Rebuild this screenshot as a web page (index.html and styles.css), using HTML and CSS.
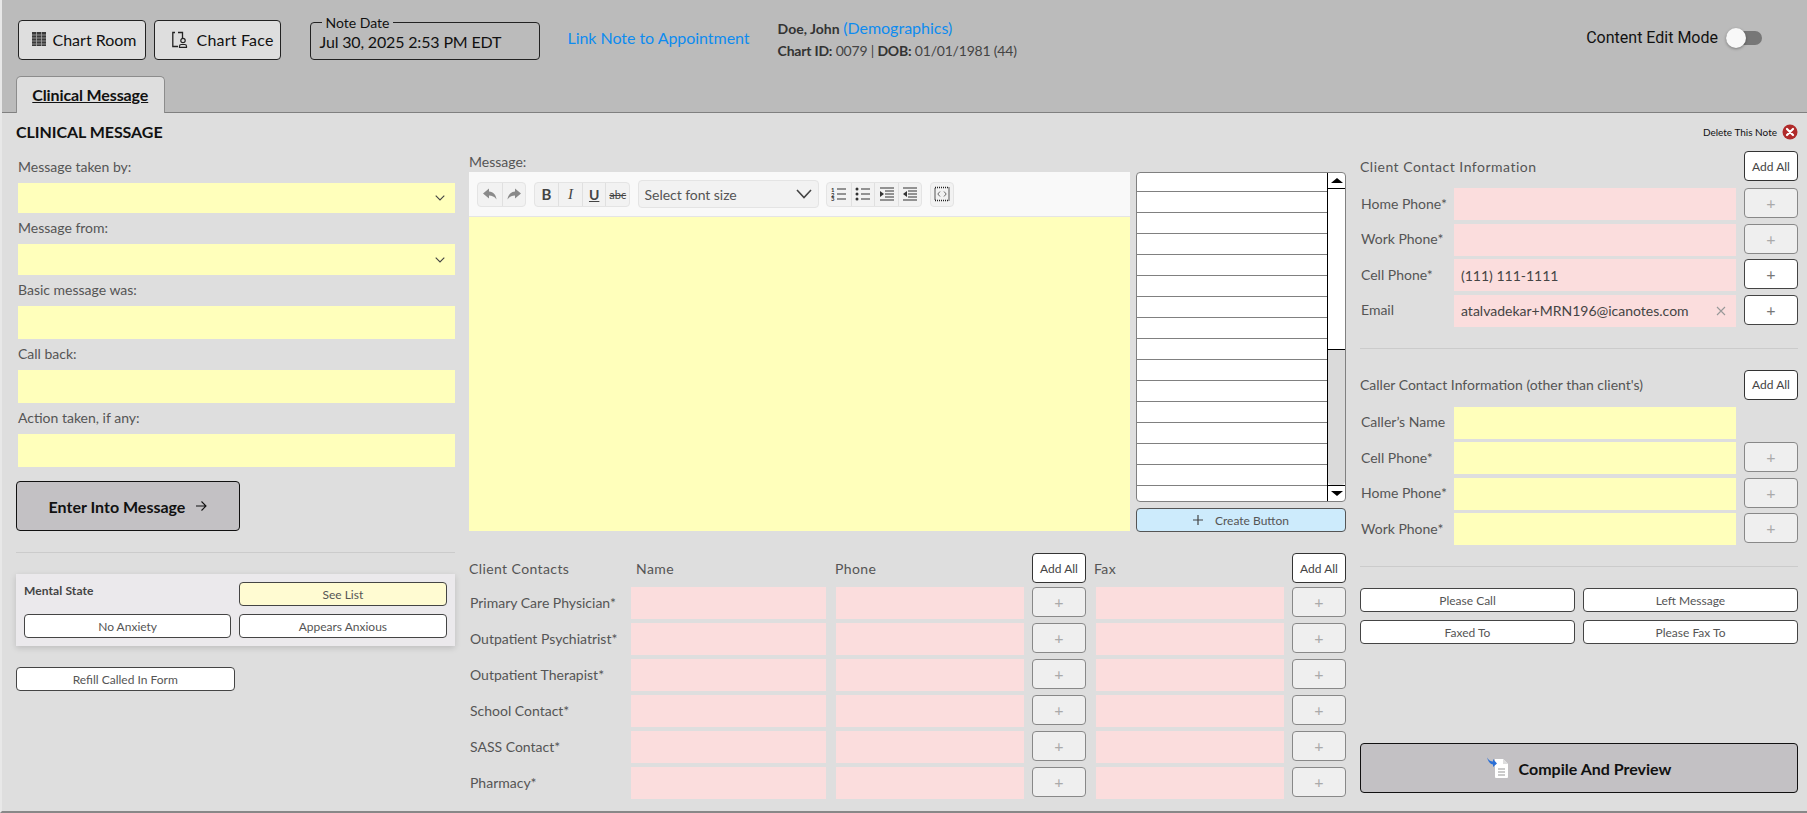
FILE: index.html
```html
<!DOCTYPE html>
<html lang="en">
<head>
<meta charset="utf-8">
<title>Clinical Message</title>
<link rel="stylesheet" href="styles.css">
</head>
<body>
<div class="page">
  <header class="top">
    <div class="topbar">
      <button class="chart-btn chart-room">
        <svg viewBox="0 0 14 14" width="14" height="14"><path d="M0 0h14v14H0z" fill="#3a3a3a"/><path d="M4.500 0v14M9.500 0v14M0 3h14M0 6h14M0 9h14M0 12h14" stroke="#a8a8a8" stroke-width=".8" fill="none"/></svg>
        <span>Chart Room</span>
      </button>
      <button class="chart-btn chart-face">
        <svg viewBox="0 0 16 17" width="16" height="17"><path d="M6 15.500H.8V1.500H3M6 1.500h4.500V7" fill="none" stroke="#222" stroke-width="1.300"/><circle cx="11" cy="9.500" r="2.200" fill="none" stroke="#222" stroke-width="1.200"/><path d="M7.500 16.400v-1.200c0-1 .9-1.700 1.800-1.700h3.400c.9 0 1.800.7 1.800 1.700v1.200z" fill="none" stroke="#222" stroke-width="1.200"/></svg>
        <span>Chart Face</span>
      </button>
      <fieldset class="note-date">
        <legend>Note Date</legend>
        <div class="note-val">Jul 30, 2025 2:53 PM EDT</div>
      </fieldset>
      <a class="link-appt" href="#">Link Note to Appointment</a>
      <div class="patient">
        <div class="pt-line"><b>Doe, John</b> <a class="demo" href="#">(Demographics)</a></div>
        <div class="pt-line tight"><b>Chart ID:</b> 0079 | <b>DOB:</b> 01/01/1981 (44)</div>
      </div>
      <div class="edit-mode">
        <span>Content Edit Mode</span>
        <span class="toggle"><span class="thumb"></span></span>
      </div>
    </div>
    <div class="tabs"><a class="tab" href="#">Clinical Message</a></div>
  </header>

  <main class="main">
    <div class="title-row">
      <h1 class="title">CLINICAL MESSAGE</h1>
      <div class="delete">
        <span>Delete This Note</span>
        <svg viewBox="0 0 16 16" width="16" height="16"><circle cx="8" cy="8" r="7.500" fill="#b02a2a"/><path d="M5 5l6 6M11 5l-6 6" stroke="#fff" stroke-width="2.200" stroke-linecap="round"/></svg>
      </div>
    </div>

    <div class="cols">
      <section class="col-left">
        <div class="f-label">Message taken by:</div>
        <div class="yselect"><svg viewBox="0 0 10 6" width="10" height="6"><path d="M.7.7L5 5l4.300-4.300" fill="none" stroke="#444" stroke-width="1.100"/></svg></div>
        <div class="f-label">Message from:</div>
        <div class="yselect y31"><svg viewBox="0 0 10 6" width="10" height="6"><path d="M.7.7L5 5l4.300-4.300" fill="none" stroke="#444" stroke-width="1.100"/></svg></div>
        <div class="f-label">Basic message was:</div>
        <input class="yinput" type="text">
        <div class="f-label">Call back:</div>
        <input class="yinput" type="text">
        <div class="f-label">Action taken, if any:</div>
        <input class="yinput" type="text">
        <button class="big-btn enter">Enter Into Message
          <svg viewBox="0 0 12 12" width="12" height="12"><path d="M1 6h10M6.500 1.500L11 6l-4.500 4.500" fill="none" stroke="#111" stroke-width="1.100"/></svg>
        </button>
        <hr class="rule">
        <div class="panel">
          <div class="panel-title">Mental State</div>
          <button class="sbtn see">See List</button>
          <button class="sbtn">No Anxiety</button>
          <button class="sbtn">Appears Anxious</button>
        </div>
        <button class="sbtn refill">Refill Called In Form</button>
      </section>

      <section class="col-mid">
        <div class="msg-label">Message:</div>
        <div class="editor-row">
          <div class="editor">
            <div class="ed-tools">
              <div class="ed-group">
                <span class="ed-btn"><svg viewBox="0 0 16 14" width="16" height="14"><path d="M7 1.500L1 6.500l6 5V8.500c3 0 5.500 1 7.500 4-.5-4.500-3-7.500-7.500-8z" fill="#8a8a8a"/></svg></span>
                <span class="ed-btn"><svg viewBox="0 0 16 14" width="16" height="14"><path d="M9 1.500l6 5-6 5V8.500c-3 0-5.500 1-7.500 4 .5-4.500 3-7.500 7.500-8z" fill="#8a8a8a"/></svg></span>
              </div>
              <div class="ed-group">
                <span class="ed-btn ed-b">B</span>
                <span class="ed-btn ed-i">I</span>
                <span class="ed-btn ed-u">U</span>
                <span class="ed-btn ed-s">abc</span>
              </div>
              <div class="ed-size">
                <span>Select font size</span>
                <svg viewBox="0 0 16 10" width="16" height="10"><path d="M1 1l7 7.500L15 1" fill="none" stroke="#444" stroke-width="1.600"/></svg>
              </div>
              <div class="ed-group">
                <span class="ed-btn"><svg viewBox="0 0 16 14" width="16" height="14"><path d="M6 2h9M6 7h9M6 12h9" stroke="#333" stroke-width="1.200"/><text x="0" y="5" class="svg-num">1</text><text x="0" y="9.500" class="svg-num">2</text><text x="0" y="14" class="svg-num">3</text></svg></span>
                <span class="ed-btn"><svg viewBox="0 0 16 14" width="16" height="14"><path d="M6 2h9M6 7h9M6 12h9" stroke="#333" stroke-width="1.200"/><circle cx="2" cy="2" r="1.500" fill="#333"/><circle cx="2" cy="7" r="1.500" fill="#333"/><circle cx="2" cy="12" r="1.500" fill="#333"/></svg></span>
                <span class="ed-btn"><svg viewBox="0 0 16 14" width="16" height="14"><path d="M1 1h14M6 4h9M6 7h9M6 10h9M1 13h14" stroke="#333" stroke-width="1"/><path d="M1 4l4 3-4 3z" fill="#333"/></svg></span>
                <span class="ed-btn"><svg viewBox="0 0 16 14" width="16" height="14"><path d="M1 1h14M6 4h9M6 7h9M6 10h9M1 13h14" stroke="#333" stroke-width="1"/><path d="M5 4L1 7l4 3z" fill="#333"/></svg></span>
              </div>
              <div class="ed-group">
                <span class="ed-btn ed-code"><svg viewBox="0 0 16 16" width="16" height="16"><rect x="1" y="1.500" width="14" height="13" fill="none" stroke="#222" stroke-width="1.500" stroke-dasharray="1 1"/><path d="M6 5.500L3.800 8 6 10.500M10 5.500L12.200 8 10 10.500" fill="none" stroke="#666" stroke-width="1"/></svg></span>
              </div>
            </div>
            <div class="ed-body"></div>
          </div>
          <div class="side">
            <div class="listbox">
              <div class="list-rows">
                <div class="lrow first"></div>
                <div class="lrow"></div><div class="lrow"></div><div class="lrow"></div><div class="lrow"></div>
                <div class="lrow"></div><div class="lrow"></div><div class="lrow"></div><div class="lrow"></div>
                <div class="lrow"></div><div class="lrow"></div><div class="lrow"></div><div class="lrow"></div>
                <div class="lrow"></div><div class="lrow"></div>
                <div class="lrow last"></div>
              </div>
              <div class="sbar">
                <div class="sb-up"></div>
                <div class="sb-thumb"></div>
                <div class="sb-track"></div>
                <div class="sb-down"></div>
              </div>
            </div>
            <button class="create"><svg viewBox="0 0 10 10" width="10" height="10"><path d="M5 0v10M0 5h10" stroke="#444" stroke-width="1.200"/></svg><span>Create Button</span></button>
          </div>
        </div>

        <div class="contacts">
          <div class="c-head">Client Contacts</div>
          <div class="c-head c-name">Name</div>
          <div class="c-head c-phone">Phone</div>
          <button class="add-all">Add All</button>
          <div class="c-head c-fax">Fax</div>
          <button class="add-all">Add All</button>

          <div class="c-label">Primary Care Physician*</div>
          <input class="pinput" type="text"><input class="pinput" type="text"><button class="plus">+</button><input class="pinput" type="text"><button class="plus">+</button>
          <div class="c-label">Outpatient Psychiatrist*</div>
          <input class="pinput" type="text"><input class="pinput" type="text"><button class="plus">+</button><input class="pinput" type="text"><button class="plus">+</button>
          <div class="c-label">Outpatient Therapist*</div>
          <input class="pinput" type="text"><input class="pinput" type="text"><button class="plus">+</button><input class="pinput" type="text"><button class="plus">+</button>
          <div class="c-label">School Contact*</div>
          <input class="pinput" type="text"><input class="pinput" type="text"><button class="plus">+</button><input class="pinput" type="text"><button class="plus">+</button>
          <div class="c-label">SASS Contact*</div>
          <input class="pinput" type="text"><input class="pinput" type="text"><button class="plus">+</button><input class="pinput" type="text"><button class="plus">+</button>
          <div class="c-label">Pharmacy*</div>
          <input class="pinput" type="text"><input class="pinput" type="text"><button class="plus">+</button><input class="pinput" type="text"><button class="plus">+</button>
        </div>
      </section>

      <section class="col-right">
        <div class="r-head spaced">
          <span>Client Contact Information</span>
          <button class="add-all">Add All</button>
        </div>
        <div class="r-grid">
          <div class="r-label">Home Phone*</div><input class="pinput" type="text"><button class="plus">+</button>
          <div class="r-label">Work Phone*</div><input class="pinput" type="text"><button class="plus">+</button>
          <div class="r-label">Cell Phone*</div><input class="pinput" type="text" value="(111) 111-1111"><button class="plus on">+</button>
          <div class="r-label">Email</div>
          <div class="email"><span>atalvadekar+MRN196@icanotes.com</span><svg viewBox="0 0 10 10" width="10" height="10"><path d="M1 1l8 8M9 1l-8 8" stroke="#999" stroke-width="1.100"/></svg></div>
          <button class="plus on">+</button>
        </div>
        <hr class="rule">
        <div class="r-head">
          <span>Caller Contact Information (other than client's)</span>
          <button class="add-all">Add All</button>
        </div>
        <div class="r-grid">
          <div class="r-label">Caller’s Name</div><input class="yinput" type="text"><span></span>
          <div class="r-label">Cell Phone*</div><input class="yinput" type="text"><button class="plus">+</button>
          <div class="r-label">Home Phone*</div><input class="yinput" type="text"><button class="plus">+</button>
          <div class="r-label">Work Phone*</div><input class="yinput" type="text"><button class="plus">+</button>
        </div>
        <hr class="rule">
        <div class="quick">
          <button class="sbtn">Please Call</button>
          <button class="sbtn">Left Message</button>
          <button class="sbtn">Faxed To</button>
          <button class="sbtn">Please Fax To</button>
        </div>
        <button class="big-btn compile">
          <svg viewBox="0 0 24 22" width="24" height="22"><path d="M8 3h8l5 5v13a1 1 0 0 1-1 1H9a1 1 0 0 1-1-1z" fill="#fff"/><path d="M16 3l5 5h-5z" fill="#ddd"/><path d="M11 13h7M11 16h7M11 19h7" stroke="#bbb" stroke-width="1.300"/><path d="M0 1.500c2 3 4 4 6 4V3l4 4.500-4 3.500V8.500C3 8 1 5 0 1.500z" fill="#2a6fd6"/></svg>
          <span>Compile And Preview</span>
        </button>
      </section>
    </div>
  </main>
</div>
</body>
</html>
```

FILE: styles.css
```css
* { box-sizing: border-box; }
html, body { margin: 0; padding: 0; height: 813px; overflow: hidden; }
body { font-family: "Lato", "Liberation Sans", sans-serif; font-size: 14px; color: #555; background: #dedede; }
button, input { font-family: inherit; margin: 0; }
input { outline: none; }

.page { height: 813px; display: flex; flex-direction: column; border-left: 2px solid #e8e8e8; border-bottom: 2px solid #888; }

/* header */
.top { height: 113px; background: #bbb; border-bottom: 1px solid #808080; flex: none; }
.topbar { height: 76px; display: flex; align-items: flex-start; padding: 14px 45px 0 16px; }
.chart-btn { height: 40px; margin-top: 6px; background: #dedede; border: 1px solid #222; border-radius: 4px; display: flex; align-items: center; font-size: 16px; color: #111; padding: 0 0 2px; }
.chart-room { width: 127.500px; gap: 6.500px; padding-left: 13px; }
.chart-face { width: 127.500px; margin-left: 8px; gap: 9px; padding-left: 17px; }
.chart-face span { letter-spacing: .2px; }
.note-date { width: 230px; height: 46px; margin: 0 0 0 28.500px; padding: 0 9px; border: 1px solid #222; border-radius: 4px; color: #111; min-width: 0; }
.note-date legend { font-size: 14px; line-height: 17px; padding: 0 4px; margin-left: 2px; }
.note-val { font-size: 16px; line-height: 22px; letter-spacing: -.16px; }
.link-appt { margin: 14px 0 0 28px; font-size: 16px; line-height: 20px; color: #0d8bf0; text-decoration: none; letter-spacing: -.04px; }
.patient { margin: 3px 0 0 28px; color: #444; }
.pt-line { line-height: 21.500px; }
.pt-line b { color: #333; }
.tight { letter-spacing: -.2px; }
.demo { font-size: 16px; color: #0d8bf0; text-decoration: none; }
.edit-mode { margin: 13px 0 0 auto; display: flex; align-items: center; gap: 8px; font-family: "Roboto", sans-serif; font-size: 16px; color: #111; height: 21px; }
.toggle { width: 36px; height: 14px; border-radius: 7px; background: #777; display: flex; align-items: center; }
.thumb { width: 20px; height: 20px; border-radius: 50%; background: #f8f8f8; box-shadow: 0 1px 3px rgba(0,0,0,.35); }
.tabs { height: 36px; padding-left: 14px; }
.tab { display: block; width: 148.500px; height: 37px; text-align: center; line-height: 35px; background: #dedede; border: 1px solid #8c8c8c; border-bottom: 0; border-radius: 5px 5px 0 0; font-size: 16px; font-weight: 700; color: #111; text-decoration: underline; letter-spacing: -.12px; position: relative; }

/* main */
.main { flex: 1; min-height: 0; padding: 0 9px 18px 14px; display: flex; flex-direction: column; }
.title-row { height: 38px; padding-bottom: 1px; display: flex; justify-content: space-between; align-items: center; flex: none; }
.title { margin: 0; font-size: 16px; font-weight: 700; color: #111; letter-spacing: -.05px; }
.delete { display: flex; align-items: center; gap: 5px; font-size: 10px; color: #111; }
.cols { flex: 1; min-height: 0; display: flex; gap: 14px; }

/* left */
.col-left { width: 439px; flex: none; display: flex; flex-direction: column; }
.f-label { height: 31px; padding: 0 0 2px 2px; display: flex; align-items: center; flex: none; }
.f-label:first-child { height: 32px; }
.yselect { height: 30px; margin-left: 2px; background: #ffb; display: flex; align-items: center; justify-content: flex-end; padding-right: 10px; flex: none; }
.y31 { height: 31px; }
.yinput { display: block; width: 100%; height: 32px; background: #ffb; border: 0; padding: 0 6px; flex: none; min-width: 0; }
.col-left .yinput { width: 437px; height: 33px; margin-left: 2px; }
.big-btn { display: flex; align-items: center; justify-content: center; background: #c3c1c4; border: 1px solid #111; border-radius: 4px; font-size: 16px; font-weight: 700; color: #111; padding: 0; flex: none; height: 50px; }
.enter { width: 224px; margin-top: 14px; gap: 10px; }
.rule { width: 100%; height: 1px; margin: 21px 0; border: 0; background: #cbcbcb; flex: none; }
.panel { background: #ebe9ec; padding: 8px 8.500px 8px 8px; display: grid; grid-template-columns: 1fr 1fr; gap: 8px; box-shadow: 0 2px 6px rgba(0,0,0,.15); flex: none; }
.panel-title { font-size: 12px; font-weight: 700; color: #444; letter-spacing: .1px; line-height: 17px; }
.sbtn { height: 24px; background: #fff; border: 1px solid #444; border-radius: 4px; font-size: 12px; color: #555; padding: 0; }
.see { background: #fffbd2; }
.refill { width: 218.500px; margin-top: 21px; flex: none; }

/* middle */
.col-mid { width: 877px; flex: none; }
.msg-label { height: 21px; display: flex; align-items: center; }
.editor-row { display: flex; gap: 6px; height: 360px; }
.editor { width: 661px; height: 359px; background: #f9f9f9; display: flex; flex-direction: column; }
.ed-tools { height: 45px; flex: none; display: flex; align-items: center; gap: 7.500px; padding: 0 8px; border-bottom: 1px solid #e5e5e5; }
.ed-body { flex: 1; background: #ffb; }
.ed-group { display: flex; height: 25px; border: 1px solid #e4e4e4; border-radius: 4px; background: #f2f2f2; }
.ed-btn { width: 23.600px; display: flex; align-items: center; justify-content: center; border-left: 1px solid #e0e0e0; color: #444; }
.ed-btn:first-child { border-left: 0; }
.ed-code { width: 22px; }
.ed-b { font-weight: 700; font-size: 15px; }
.ed-i { font-style: italic; font-size: 15px; font-family: "Liberation Serif", serif; }
.ed-u { text-decoration: underline; font-weight: 700; font-size: 14px; }
.ed-s { text-decoration: line-through; font-size: 11px; }
.ed-size { width: 181px; height: 28px; border: 1px solid #e4e4e4; border-radius: 4px; background: #f2f2f2; display: flex; align-items: center; justify-content: space-between; padding: 0 6px; font-size: 14px; color: #555; letter-spacing: -.05px; }
.svg-num { font-size: 6px; font-weight: 700; fill: #333; }

.side { width: 210px; display: flex; flex-direction: column; gap: 6px; }
.listbox { height: 330px; display: flex; background: #fff; border: 1px solid #808080; border-radius: 4px; overflow: hidden; flex: none; }
.list-rows { flex: 1; display: flex; flex-direction: column; }
.lrow { height: 21px; border-bottom: 1px solid #808080; flex: none; }
.lrow.first { height: 19px; }
.lrow.last { flex: 1; border-bottom: 0; }
.sbar { width: 18px; flex: none; border-left: 1px solid #000; display: flex; flex-direction: column; }
.sb-up { height: 16px; border-bottom: 1px solid #000; display: flex; align-items: center; justify-content: center; flex: none; }
.sb-up::before { content: ""; border: 6px solid transparent; border-top: 0; border-bottom: 5px solid #000; }
.sb-thumb { height: 161px; background: #fff; border-bottom: 1px solid #000; flex: none; }
.sb-track { flex: 1; background: #dadada; border-radius: 0 0 4px 4px; }
.sb-down { height: 16px; border-top: 1px solid #000; display: flex; align-items: center; justify-content: center; flex: none; }
.sb-down::before { content: ""; border: 6px solid transparent; border-bottom: 0; border-top: 5px solid #000; }
.create { height: 24px; background: #cdebfc; border: 1px solid #555; border-radius: 4px; font-size: 12px; color: #555; display: flex; align-items: center; justify-content: center; gap: 12px; padding: 0; }

.contacts { margin-top: 21px; display: grid; grid-template-columns: 162px 195px 198px 62px 198px 62px; grid-template-rows: 30px repeat(6, 32px); row-gap: 4px; }
.c-head { display: flex; align-items: center; letter-spacing: .4px; padding-top: 1px; }
.c-name { padding-left: 5px; }
.c-phone { padding-left: 9px; margin-right: 8px; }
.c-fax { padding-left: 8px; margin-right: 8px; }
.c-label { display: flex; align-items: center; padding: 0 0 2px 1px; height: 32px; font-size: 14px; }
.contacts .pinput { width: 100%; }
.contacts .pinput:not(:nth-of-type(3n+1)) { width: calc(100% - 10px); margin-left: 10px; }
.contacts .add-all, .contacts .plus { margin-left: 8px; }
.pinput { height: 32px; background: #fbdddd; border: 0; padding: 0 7px; font-size: 14px; color: #444; min-width: 0; }
.add-all { height: 30px; background: #fff; border: 1px solid #333; border-radius: 4px; font-size: 12px; color: #444; padding: 0; width: 54px; }
.plus { height: 30px; width: 54px; background: #efefef; border: 1px solid #888; border-radius: 4px; font-size: 16px; color: #aaa; padding: 0; line-height: 1; }
.plus.on { background: #fff; border-color: #444; color: #777; }

/* right */
.col-right { width: 438px; flex: none; display: flex; flex-direction: column; }
.r-head { height: 30px; display: flex; align-items: center; justify-content: space-between; flex: none; }
.spaced span { letter-spacing: .5px; }
.r-grid { margin-top: 7px; display: grid; grid-template-columns: 94px 282px 62px; row-gap: 3.500px; flex: none; }
.r-grid .plus { margin-left: 8px; }
.r-label { padding: 0 0 2px 1px; display: flex; align-items: center; height: 32px; }
.email { height: 32px; background: #fbdddd; display: flex; align-items: center; justify-content: space-between; padding: 0 10px 0 7px; color: #444; font-size: 14px; }
.quick { display: grid; grid-template-columns: 1fr 1fr; gap: 8px; flex: none; }
.compile { margin-top: auto; gap: 8px; width: 100%; }
.compile svg { margin-top: -2px; }
```
